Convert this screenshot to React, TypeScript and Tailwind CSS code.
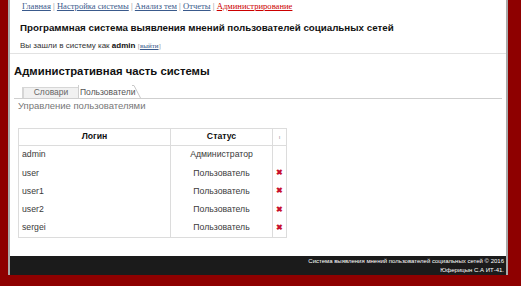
import React from "react";

const users = [
  { login: "admin", status: "Администратор", removable: false },
  { login: "user", status: "Пользователь", removable: true },
  { login: "user1", status: "Пользователь", removable: true },
  { login: "user2", status: "Пользователь", removable: true },
  { login: "sergei", status: "Пользователь", removable: true },
];

const navLinks = ["Главная", "Настройка системы", "Анализ тем", "Отчеты"];

export default function App() {
  return (
    <div className="h-[286px] w-[521px] overflow-hidden bg-[#8e0000] font-['Liberation_Sans',Tahoma,sans-serif]">
      <div className="ml-[8px] w-[500px] border-x-2 border-[#a9a9a9] bg-white">
        {/* Header */}
        <div className="px-[10px]">
          <div className="h-[12px] pl-[2px] pt-[1px] font-['Liberation_Serif',serif] text-[8.6px] leading-[10px]">
            {navLinks.map((l) => (
              <span key={l}>
                <a className="text-[#3a5a8c] underline">{l}</a>
                <span className="text-[#888]"> | </span>
              </span>
            ))}
            <a className="text-[#c00] underline">Администрирование</a>
          </div>
          <div className="mt-[10px] text-[9.75px] font-bold leading-[12px] text-[#111]">
            Программная система выявления мнений пользователей социальных сетей
          </div>
          <div className="mt-[6px] text-[8px] leading-[12px] text-[#333]">
            Вы зашли в систему как <b className="text-[#111]">admin</b>{" "}
            <span className="font-['Liberation_Serif',serif] text-[7px] text-[#999]">
              [<a className="text-[#3a5a8c] underline">выйти</a>]
            </span>
          </div>
        </div>
        <div className="mt-[1px] h-px bg-[#e2e2e2]" />

        {/* Admin section */}
        <div className="px-[4px] pt-[10px]">
          <h1 className="text-[11.3px] font-bold leading-[14px] text-[#111]">
            Административная часть системы
          </h1>
          <div className="mt-[7px] flex h-[14px] items-end border-b border-[#cfcfcf] pl-[8px] text-[8.5px] leading-[11px]">
            <div className="flex h-[11px] w-[56px] items-end justify-center border-l-2 border-t border-[#d6d6d6] bg-[#f1f1f1] text-[#666]">
              Словари
            </div>
            <div className="relative flex h-[13px] w-[56px] items-end border-l border-[#cfcfcf] pl-[1px] text-[#555]">
              Пользователи
              <svg className="absolute -right-[7px] top-0" width="9" height="13" viewBox="0 0 9 13">
                <path d="M0 0.5 L2 0.5 L8.5 13" stroke="#c8c8c8" fill="none" strokeWidth="1" />
              </svg>
            </div>
          </div>
          <div className="mt-[1px] pl-[4px] text-[9.5px] leading-[12px] text-[#777]">
            Управление пользователями
          </div>

          {/* Users table */}
          <table className="ml-[4px] mt-[16px] w-[269px] border-collapse border border-[#dcdcdc] text-[8.7px] text-[#3a3a3a]">
            <thead>
              <tr className="h-[17px]">
                <th className="w-[152px] border border-[#dcdcdc] font-bold text-[#111]">Логин</th>
                <th className="w-[102px] border border-[#dcdcdc] font-bold text-[#111]">Статус</th>
                <th className="border border-[#dcdcdc] text-[6px] font-normal text-[#999]">ı</th>
              </tr>
            </thead>
            <tbody>
              {users.map((u) => (
                <tr key={u.login} className="h-[18.4px]">
                  <td className="border-x border-[#dcdcdc] pl-[3px]">{u.login}</td>
                  <td className="border-x border-[#dcdcdc] text-center">{u.status}</td>
                  <td className="border-x border-[#dcdcdc] text-center text-[8px] font-bold text-[#c8102e]">
                    {u.removable ? "✖" : ""}
                  </td>
                </tr>
              ))}
            </tbody>
          </table>
        </div>

        {/* Footer */}
        <div className="mt-[18px] h-[19px] bg-[#1b1b1b] pr-[2px] pt-[1.5px] text-right text-[6px] leading-[8.5px] text-white">
          <div>Система выявления мнений пользователей социальных сетей © 2016</div>
          <div>Юферицын С.А ИТ-41.</div>
        </div>
      </div>
    </div>
  );
}
